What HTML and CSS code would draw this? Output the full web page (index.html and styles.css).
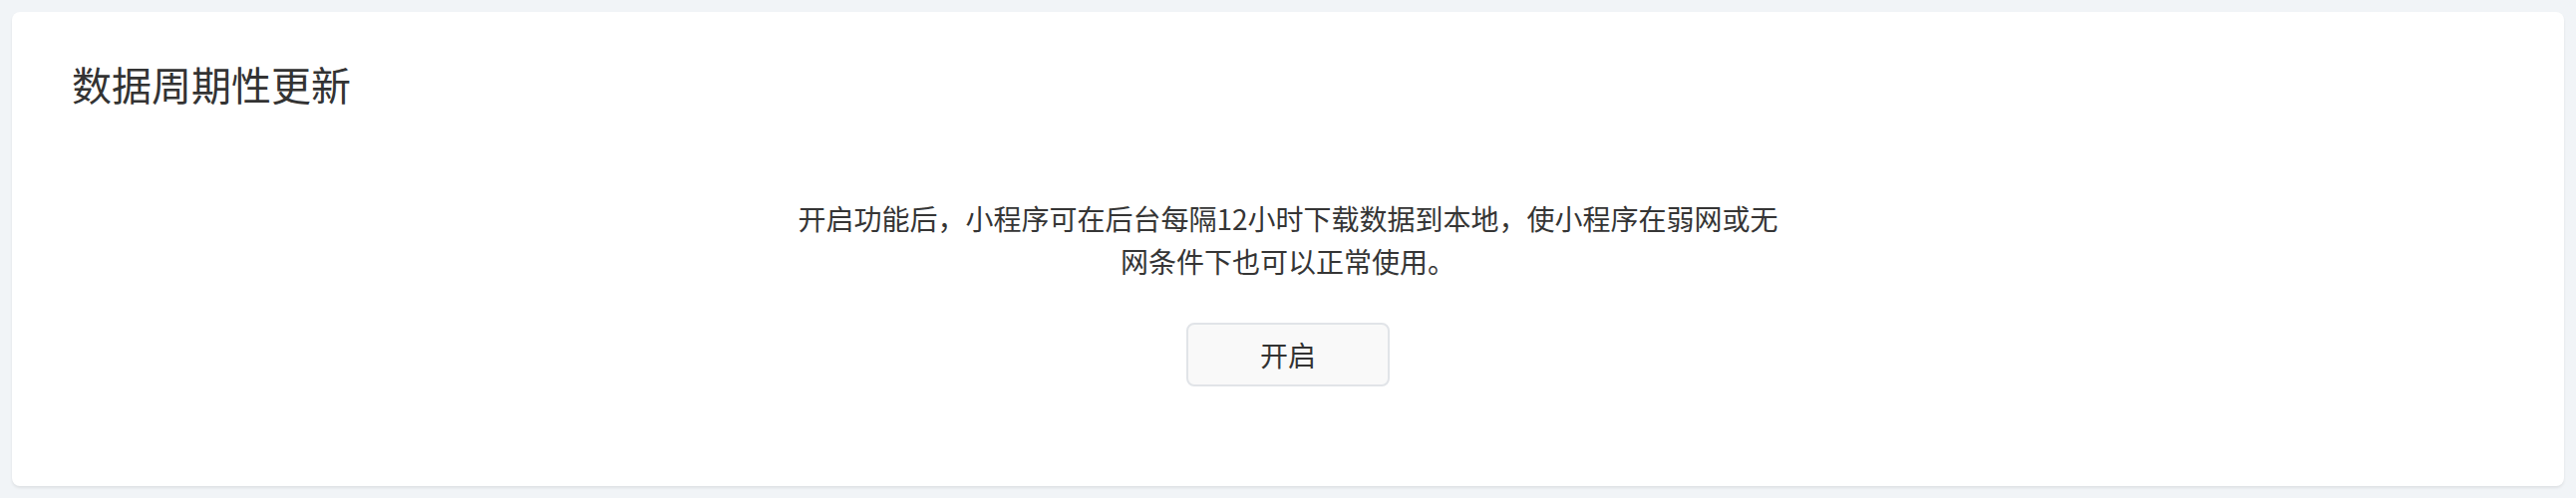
FILE: index.html
```html
<!doctype html>
<html lang="zh-CN">
<head>
  <meta charset="UTF-8">
  <title>数据周期性更新</title>
  <link rel="stylesheet" href="styles.css">
</head>
<body>
<div class="card">
  <h2 class="card-title">数据周期性更新</h2>
  <div class="card-body">
    <p class="desc">开启功能后，小程序可在后台每隔12小时下载数据到本地，使小程序在弱网或无网条件下也可以正常使用。</p>
    <button type="button" class="btn">开启</button>
  </div>
</div>
</body>
</html>
```

FILE: styles.css
```css
html, body { margin: 0; padding: 0; }
* { box-sizing: border-box; font-family: "Noto Sans CJK SC", "Noto Sans", sans-serif; }
body { background: #f1f4f7; padding: 12px; color: #353535; }
.card { background: #fff; border-radius: 8px; box-shadow: 0 2px 3px rgba(0, 0, 0, 0.08); padding: 52px 60px 100px; }
.card-title { margin: 0; font-size: 40px; line-height: 40px; font-weight: normal; color: #333; }
.card-body { display: flex; flex-direction: column; align-items: center; margin-top: 94px; }
.desc { margin: 0; max-width: 996px; text-align: center; font-size: 28px; line-height: 43px; }
.btn { margin-top: 40px; width: 204px; height: 64px; border: 2px solid #e1e4e8; border-radius: 8px; background: #f9f9f9; color: #333; font-size: 28px; cursor: pointer; }
```
